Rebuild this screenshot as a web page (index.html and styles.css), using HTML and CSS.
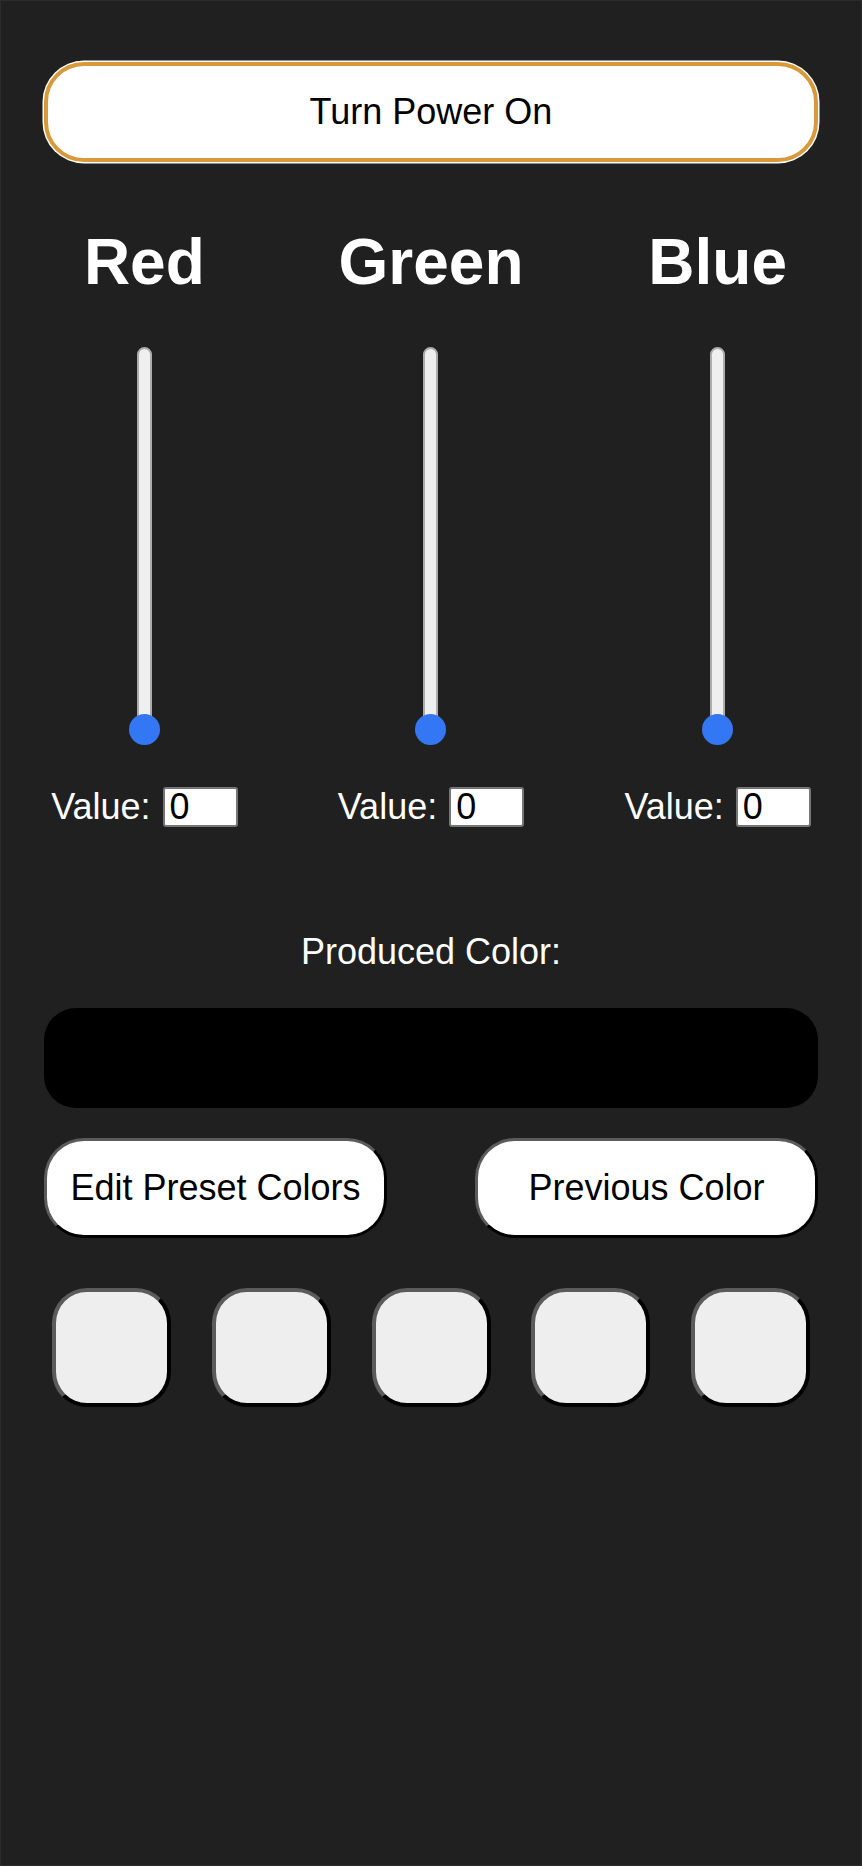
FILE: index.html
```html
<!DOCTYPE html>
<html lang="en">
<head>
<meta charset="utf-8">
<title>RGB Controller</title>
<link rel="stylesheet" href="styles.css">
</head>
<body>
<div class="page">
  <div class="main">
    <button class="power-btn" type="button">Turn Power On</button>
  </div>

  <div class="channels">
    <div class="channel">
      <h1 class="channel-title">Red</h1>
      <div class="slider">
        <div class="track"></div>
        <div class="thumb"></div>
      </div>
      <div class="value-row">
        <label class="value-label">Value:</label>
        <input class="value-input" type="text" value="0">
      </div>
    </div>
    <div class="channel">
      <h1 class="channel-title">Green</h1>
      <div class="slider">
        <div class="track"></div>
        <div class="thumb"></div>
      </div>
      <div class="value-row">
        <label class="value-label">Value:</label>
        <input class="value-input" type="text" value="0">
      </div>
    </div>
    <div class="channel">
      <h1 class="channel-title">Blue</h1>
      <div class="slider">
        <div class="track"></div>
        <div class="thumb"></div>
      </div>
      <div class="value-row">
        <label class="value-label">Value:</label>
        <input class="value-input" type="text" value="0">
      </div>
    </div>
  </div>

  <div class="main">
    <p class="produced-label">Produced Color:</p>
    <div class="color-bar"></div>
    <div class="actions">
      <button class="action-btn" type="button">Edit Preset Colors</button>
      <button class="action-btn" type="button">Previous Color</button>
    </div>
    <div class="swatches">
      <button class="swatch" type="button"></button>
      <button class="swatch" type="button"></button>
      <button class="swatch" type="button"></button>
      <button class="swatch" type="button"></button>
      <button class="swatch" type="button"></button>
    </div>
  </div>
</div>
</body>
</html>
```

FILE: styles.css
```css
html, body {
  margin: 0;
  padding: 0;
  background: #202020;
}

body {
  font-family: "Liberation Sans", Arial, sans-serif;
  color: #ffffff;
}

.page {
  width: 862px;
  height: 1866px;
  box-sizing: border-box;
  border: 1px solid #2c2c2c;
  background: #202020;
  padding-top: 61px;
}

.main {
  width: 774px;
  margin: 0 auto;
}

.power-btn {
  display: block;
  width: 100%;
  height: 100px;
  box-sizing: border-box;
  background: #ffffff;
  border: 4px solid #d8993a;
  border-radius: 40px;
  box-shadow: 0 0 0 1.5px #ffffff;
  font-family: "Liberation Sans", Arial, sans-serif;
  font-size: 36px;
  color: #000000;
  padding: 0;
}

.channels {
  display: grid;
  grid-template-columns: repeat(3, 1fr);
  margin-top: 63px;
}

.channel {
  display: flex;
  flex-direction: column;
  align-items: center;
}

.channel-title {
  margin: 0;
  font-size: 64px;
  line-height: 74px;
  font-weight: bold;
  color: #ffffff;
}

.slider {
  position: relative;
  width: 31px;
  height: 398px;
  margin-top: 48px;
  display: flex;
  justify-content: center;
}

.track {
  width: 15px;
  height: 390px;
  box-sizing: border-box;
  background: #efefef;
  border: 2px solid #acacac;
  border-radius: 8px;
}

.thumb {
  position: absolute;
  left: 0;
  bottom: 0;
  width: 31px;
  height: 31px;
  border-radius: 50%;
  background: #3477f5;
}

.value-row {
  display: flex;
  align-items: center;
  gap: 12px;
  height: 41px;
  margin-top: 41px;
}

.value-label {
  font-size: 36px;
  color: #ffffff;
}

.value-input {
  width: 75px;
  height: 40px;
  box-sizing: border-box;
  border: 2px solid #767676;
  border-radius: 3px;
  background: #ffffff;
  color: #000000;
  font-family: "Liberation Sans", Arial, sans-serif;
  font-size: 36px;
  padding: 0 5px;
  margin: 0;
}

.produced-label {
  margin: 104px 0 0;
  text-align: center;
  font-size: 36px;
  line-height: 41px;
  color: #ffffff;
}

.color-bar {
  margin-top: 36px;
  height: 100px;
  background: #000000;
  border-radius: 32px;
}

.actions {
  display: flex;
  justify-content: space-between;
  margin-top: 30px;
}

.action-btn {
  width: 343px;
  height: 100px;
  box-sizing: border-box;
  background: #ffffff;
  border: 3px solid;
  border-color: #5b5b5b #000000 #000000 #5b5b5b;
  border-radius: 40px;
  font-family: "Liberation Sans", Arial, sans-serif;
  font-size: 36px;
  color: #000000;
  padding: 0;
}

.swatches {
  display: flex;
  justify-content: space-between;
  padding: 0 8px;
  margin-top: 50px;
}

.swatch {
  width: 119px;
  height: 119px;
  box-sizing: border-box;
  background: #eeeeee;
  border: 4px solid;
  border-color: #5b5b5b #000000 #000000 #5b5b5b;
  border-radius: 35px;
  padding: 0;
}
```
